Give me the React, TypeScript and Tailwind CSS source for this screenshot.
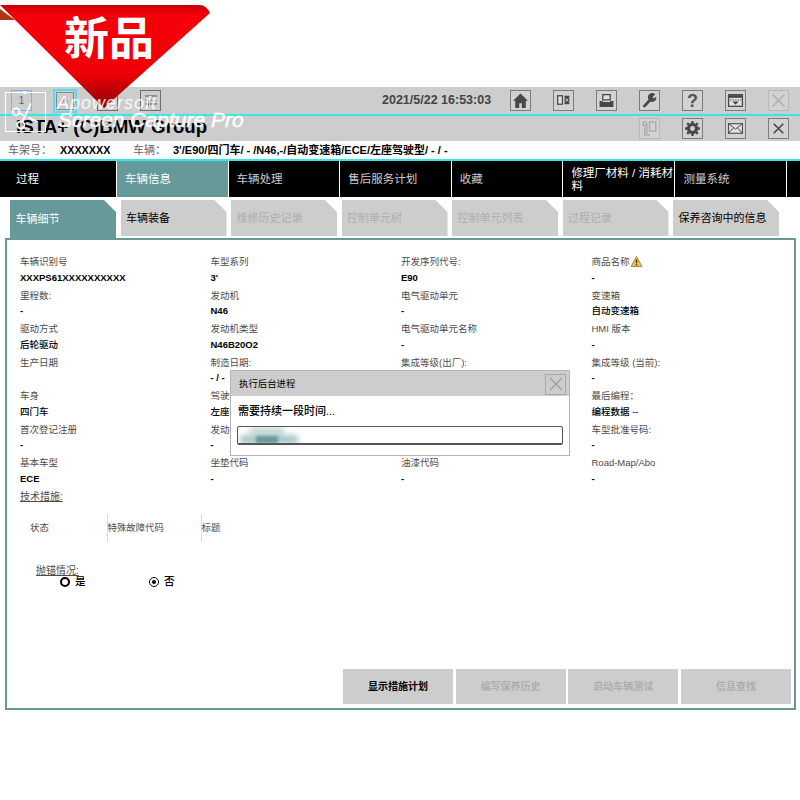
import type { FC, ReactNode } from 'react';
import { Scissors } from 'lucide-react';

const fontStack = "font-['Liberation_Sans','Noto_Sans_CJK_SC',sans-serif]";

const navItems = [
  { label: '过程', cls: 'w-[116px] bg-black pl-[16px] text-white' },
  { label: '车辆信息', cls: 'w-[110.6px] bg-[#669999] pl-[8px] text-white' },
  { label: '车辆处理', cls: 'w-[110.6px] bg-black pl-[8px] text-[#cdcdcd]' },
  { label: '售后服务计划', cls: 'w-[110.6px] bg-black pl-[8px] text-[#cdcdcd]' },
  { label: '收藏', cls: 'w-[110.6px] bg-black pl-[8px] text-[#cdcdcd]' },
  { label: '修理厂材料 / 消耗材料', cls: 'w-[110.6px] bg-black pl-[8px] leading-[13px] text-white' },
  { label: '测量系统', cls: 'w-[110.6px] bg-black pl-[8.500px] text-[#cdcdcd]' },
];

const subTabs = [
  { label: '车辆细节', cls: 'h-[38px] bg-[#669999] text-white' },
  { label: '车辆装备', cls: 'h-[36px] bg-[#cdcdcd] text-black' },
  { label: '维修历史记录', cls: 'h-[36px] bg-[#cdcdcd] text-[#aeaeae]' },
  { label: '控制单元树', cls: 'h-[36px] bg-[#cdcdcd] text-[#aeaeae]' },
  { label: '控制单元列表', cls: 'h-[36px] bg-[#cdcdcd] text-[#aeaeae]' },
  { label: '过程记录', cls: 'h-[36px] bg-[#cdcdcd] text-[#aeaeae]' },
  { label: '保养咨询中的信息', cls: 'h-[36px] bg-[#cdcdcd] text-black' },
];

const fields: [string, string][][] = [
  [['车辆识别号', 'XXXPS61XXXXXXXXXX'], ['车型系列', "3'"], ['开发序列代号:', 'E90'], ['商品名称', '-']],
  [['里程数:', '-'], ['发动机', 'N46'], ['电气驱动单元', '-'], ['变速箱', '自动变速箱']],
  [['驱动方式', '后轮驱动'], ['发动机类型', 'N46B20O2'], ['电气驱动单元名称', '-'], ['HMI 版本', '-']],
  [['生产日期', ''], ['制造日期:', '- / -'], ['集成等级(出厂):', ''], ['集成等级 (当前):', '-']],
  [['车身', '四门车'], ['驾驶员位置', '左座驾驶型'], ['', ''], ['最后编程：', '编程数据 --']],
  [['首次登记注册', '-'], ['发动机排量', '-'], ['', ''], ['车型批准号码:', '-']],
  [['基本车型', 'ECE'], ['坐垫代码', '-'], ['油漆代码', '-'], ['Road-Map/Abo', '-']],
];

const ToolButton: FC<{ children: ReactNode; dim?: boolean }> = ({ children, dim }) => (
  <div
    className={`flex h-[21px] w-[21px] items-center justify-center border bg-[#d2d2d2] ${
      dim ? 'border-[#b8b8b8] text-[#a8a8a8]' : 'border-[#7c7c7c] text-[#484848]'
    }`}
  >
    <svg viewBox="0 0 16 16" className="h-[17px] w-[17px]" fill="none" stroke="currentColor" strokeWidth="1.2">
      {children}
    </svg>
  </div>
);

const Field: FC<{ label: string; value: string; warn?: boolean }> = ({ label, value, warn }) => {
  // the chinese values render lighter than the latin codes
  const isLatin = /^[\x20-\x7e]*$/.test(value);
  return (
    <div className="flex h-[33.55px] w-[190.5px] flex-col">
      <div className="flex h-[15.5px] items-center text-[9.5px] leading-none text-[#4c4c4c]">
        {label}
        {warn && (
          <svg viewBox="0 0 14 14" className="h-[13px] w-[13px]">
            <path d="M7 1.500 12.800 12.300H1.200Z" fill="#f3c355" stroke="#a67c2c" strokeWidth="1" strokeLinejoin="round" />
            <rect x="6.300" y="5" width="1.400" height="4" fill="#3a2c10" />
            <rect x="6.300" y="9.800" width="1.400" height="1.400" fill="#3a2c10" />
          </svg>
        )}
      </div>
      <div className={`flex h-[16px] items-center text-[9.5px] leading-none text-black ${isLatin ? 'font-bold' : 'font-medium'}`}>
        {value}
      </div>
    </div>
  );
};

const ActionButton: FC<{ children: ReactNode; enabled?: boolean }> = ({ children, enabled }) => (
  <div
    className={`flex h-[35px] w-[110px] items-center justify-center bg-[#cdcdcd] text-[10px] font-bold ${
      enabled ? 'text-black' : 'text-[#aeaeae]'
    }`}
  >
    {children}
  </div>
);

export default function App() {
  return (
    <div className={`relative h-[800px] w-[800px] overflow-hidden bg-white ${fontStack}`}>
      <div className="h-[87px]" />

      {/* top toolbar */}
      <div className="flex h-[27px] items-center bg-[#cdcdcd]">
        <div className="ml-[11px] flex h-[21px] w-[21px] items-center justify-center border border-[#7db0ee] text-[10px] text-[#666]">1</div>
        <div className="ml-[21px] flex h-[24px] w-[24px] items-center justify-center border-2 border-[#55dcee]">
          <div className="flex h-[18px] w-[18px] items-center justify-center border border-[#8a8a8a] text-[9px] text-[#666]">A</div>
        </div>
        <div className="ml-[20px] h-[21px] w-[21px] border border-[#6e6e6e]" />
        <div className="ml-[22px] flex h-[21px] w-[21px] items-center justify-center border border-[#6e6e6e] text-[#555]">
          <svg viewBox="0 0 16 16" className="h-[16px] w-[16px]" fill="none" stroke="currentColor">
            <path d="M2 3h12M2 7h3M7 7h7M2 11h3M7 11h7" />
            <path d="M5.500 3v10" />
          </svg>
        </div>
        <div className="ml-[221px] w-[110px] text-[12.500px] font-bold whitespace-nowrap text-[#444]">2021/5/22 16:53:03</div>
        <div className="ml-[18px] flex gap-[22px]">
          <ToolButton>
            <path d="M8 1.500 1 8.200h2V15h3.800v-4.500h2.400V15H13V8.200h2Z" fill="currentColor" stroke="none" />
          </ToolButton>
          <ToolButton>
            <rect x="2.500" y="3.500" width="4.500" height="8" fill="#e0e0e0" />
            <rect x="9" y="3.500" width="4.500" height="8" fill="currentColor" stroke="none" />
            <path d="M10 6 12.500 9M12.500 6 10 9" stroke="#d2d2d2" strokeWidth="0.800" />
          </ToolButton>
          <ToolButton>
            <path d="M4.500 2.500h7v5h-7Z" fill="#e0e0e0" />
            <path d="M1.500 8.500h3v1h7v-1h3v5.500h-13Z" fill="currentColor" stroke="none" />
          </ToolButton>
          <ToolButton>
            <path d="M2.500 14 8.500 7.500" strokeWidth="2.600" />
            <path d="M7.500 7.500a3.800 3.800 0 0 1 6-5.300L11 4.500l.8 1.500 2.500-1.500a3.800 3.800 0 0 1-6 4Z" fill="currentColor" stroke="none" />
          </ToolButton>
          <div className="flex h-[21px] w-[21px] items-center justify-center border border-[#7c7c7c] bg-[#d2d2d2] text-[18px] leading-none font-bold text-[#555]">?</div>
          <ToolButton>
            <rect x="1.500" y="2.500" width="13" height="11" fill="#e0e0e0" />
            <path d="M1.500 3h13v2.500h-13Z" fill="currentColor" stroke="none" />
            <path d="M2.500 7.500h11" strokeDasharray="1.500 1" strokeWidth="0.800" />
            <path d="M5 9h6l-3 3Z" fill="currentColor" stroke="none" />
          </ToolButton>
          <ToolButton dim>
            <path d="M2.500 2.500 13.500 13.500M13.500 2.500 2.500 13.500" />
          </ToolButton>
        </div>
      </div>
      <div className="h-[2px] bg-[#2fe9e9]" />

      {/* title bar */}
      <div className="flex h-[25px] items-center justify-between bg-[#cdcdcd]">
        <div className="ml-[16px] pb-[2px] text-[18.700px] leading-none font-bold whitespace-nowrap text-black">ISTA+ (C)BMW Group</div>
        <div className="mr-[11px] flex gap-[22px]">
          <ToolButton dim>
            <circle cx="3.500" cy="3.500" r="1.800" />
            <rect x="8" y="2" width="6" height="8.500" />
            <path d="M5.500 4v8.500M3.500 6.500v7.500h5" />
          </ToolButton>
          <ToolButton>
            <circle cx="8" cy="8" r="3.800" strokeWidth="3" />
            <path d="M8 1v3M8 12v3M1 8h3M12 8h3M3 3l2 2M11 11l2 2M13 3l-2 2M5 11l-2 2" strokeWidth="2.200" />
          </ToolButton>
          <ToolButton>
            <rect x="1.500" y="3.500" width="13" height="9" fill="#e0e0e0" strokeWidth="1" />
            <path d="M1.500 3.500 8 8.500l6.500-5M1.500 12.500 6 7.500M14.500 12.500 10 7.500" strokeWidth="0.900" />
          </ToolButton>
          <ToolButton>
            <path d="M3.500 3.500 12.500 12.500M12.500 3.500 3.500 12.500" strokeWidth="1.500" />
          </ToolButton>
        </div>
      </div>

      {/* vehicle summary */}
      <div className="flex h-[18px] items-center bg-white pt-px text-[11px] whitespace-nowrap">
        <span className="ml-[8px] w-[52px] text-[#666]">车架号：</span>
        <span className="w-[73px] text-[10.800px] font-bold text-black">XXXXXXX</span>
        <span className="w-[40px] text-[#666]">车辆：</span>
        <span className="font-bold text-black">3'/E90/四门车/ - /N46,-/自动变速箱/ECE/左座驾驶型/ - / -</span>
      </div>
      <div className="h-[2px] bg-[#2fe9e9]" />

      {/* main navigation */}
      <div className="flex h-[36px] gap-px bg-white">
        {navItems.map((item) => (
          <div key={item.label} className={`flex items-center pt-[2px] text-[11.500px] ${item.cls}`}>
            <span>{item.label}</span>
          </div>
        ))}
        <div className="flex-1 bg-black" />
      </div>

      {/* sub tabs */}
      <div className="mt-[3px] ml-[10px] flex h-[38px] gap-[4.500px]">
        {subTabs.map((tab) => (
          <div
            key={tab.label}
            className={`flex w-[106px] items-center pl-[5.500px] text-[11px] whitespace-nowrap [clip-path:polygon(0_0,calc(100%-12px)_0,100%_12px,100%_100%,0_100%)] ${tab.cls}`}
          >
            <span>{tab.label}</span>
          </div>
        ))}
      </div>

      {/* vehicle details panel */}
      <div className="mx-[5px] flex h-[472px] w-[791px] flex-col border-2 border-[#669999] pt-[14px] pl-[13px]">
        {fields.map((row, i) => (
          <div key={i} className="flex">
            {row.map(([label, value], j) => (
              <Field key={j} label={label} value={value} warn={label === '商品名称'} />
            ))}
          </div>
        ))}
        <div className="text-[10px] leading-[16px] text-[#4c4c4c] underline">技术措施:</div>

        <div className="mt-[9px] flex h-[28px] items-center text-[9.400px] text-[#4c4c4c]">
          <span className="ml-[10px] w-[76.500px]">状态</span>
          <span className="flex h-full w-[94px] items-center border-l border-[#ddd]">特殊故障代码</span>
          <span className="flex h-full items-center border-l border-[#ddd]">标题</span>
        </div>

        <div className="mt-[23px] ml-[16px] text-[10px] leading-[12px] text-[#4c4c4c] underline">抛锚情况:</div>
        <div className="mt-[-3px] ml-[40px] flex h-[16px] items-center text-[10.500px] font-medium text-black">
          <span className="h-[10px] w-[10px] rounded-full border-2 border-black" />
          <span className="ml-[5px] w-[74px]">是</span>
          <span className="flex h-[10px] w-[10px] items-center justify-center rounded-full border-[1.500px] border-black">
            <span className="h-[4px] w-[4px] rounded-full bg-black" />
          </span>
          <span className="ml-[5px]">否</span>
        </div>

        <div className="mt-auto mb-[4px] flex justify-end gap-[2.700px] pr-[3px]">
          <ActionButton enabled>显示措施计划</ActionButton>
          <ActionButton>编写保养历史</ActionButton>
          <ActionButton>启动车辆测试</ActionButton>
          <ActionButton>信息查找</ActionButton>
        </div>
      </div>

      {/* background process dialog */}
      <div className="absolute top-[370px] left-[230px] flex h-[86px] w-[340px] flex-col border border-[#b5b5b5] bg-white">
        <div className="flex h-[25px] items-center justify-between bg-[#cdcdcd] pt-px pr-[3px] pl-[8px] text-[9.400px] text-black">
          <span>执行后台进程</span>
          <div className="flex h-[21px] w-[21px] items-center justify-center border border-[#a8a8a8] text-[#9a9a9a]">
            <svg viewBox="0 0 16 16" className="h-4 w-4" fill="none" stroke="currentColor" strokeWidth="1.300">
              <path d="M2 2 14 14M14 2 2 14" />
            </svg>
          </div>
        </div>
        <div className="mt-[6px] ml-[7px] text-[11px] leading-[18px] font-medium text-black">需要持续一段时间...</div>
        <div className="relative mx-[6px] mt-[6px] h-[19px] overflow-hidden rounded-[2px] border border-b-2 border-[#555] bg-white">
          <div className="absolute top-[1px] left-[12px] h-[6px] w-[34px] bg-[#669999]/50 blur-[3px]" />
          <div className="absolute top-[9px] left-[2px] h-[7px] w-[58px] bg-[#669999]/70 blur-[3px]" />
          <div className="absolute top-[9px] left-[18px] h-[7px] w-[22px] bg-[#669999] blur-[1.500px]" />
        </div>
      </div>

      {/* promo ribbon */}
      <div className="absolute top-0 left-0 h-[110px] w-[212px]">
        <svg viewBox="0 0 212 110" className="absolute inset-0 h-full w-full">
          <defs>
            <linearGradient id="ribbonFill" x1="0" y1="0" x2="0" y2="1">
              <stop offset="0" stopColor="#c80008" />
              <stop offset="0.1" stopColor="#f50008" />
              <stop offset="0.65" stopColor="#f00008" />
              <stop offset="1" stopColor="#8c0000" />
            </linearGradient>
          </defs>
          <path d="M0 5H200Q206 5 210 13L104 108Z" fill="url(#ribbonFill)" />
          <path d="M0 9 15 20H0Z" fill="#b03510" />
        </svg>
        <div className="absolute top-[14px] left-[64px] text-[45px] leading-[52px] font-bold whitespace-nowrap text-white">新品</div>
      </div>

      {/* capture tool overlay */}
      <div className="absolute top-[92px] left-[5px] h-[40px] w-[41px] border border-white">
        <span className="absolute top-[-2px] left-[17px] h-[3px] w-[3px] bg-white" />
        <Scissors size={28} strokeWidth={1.600} className="absolute top-[9px] left-[5px] rotate-[-20deg] text-white" />
      </div>
      <div className="absolute top-[93px] left-[57px] text-[18px] leading-[20px] tracking-[1px] whitespace-nowrap text-white/85 italic">Apowersoft</div>
      <div className="absolute top-[108px] left-[58px] text-[21px] leading-[24px] whitespace-nowrap text-white/90 italic [-webkit-text-stroke:0.4px_white]">Screen Capture Pro</div>
    </div>
  );
}
